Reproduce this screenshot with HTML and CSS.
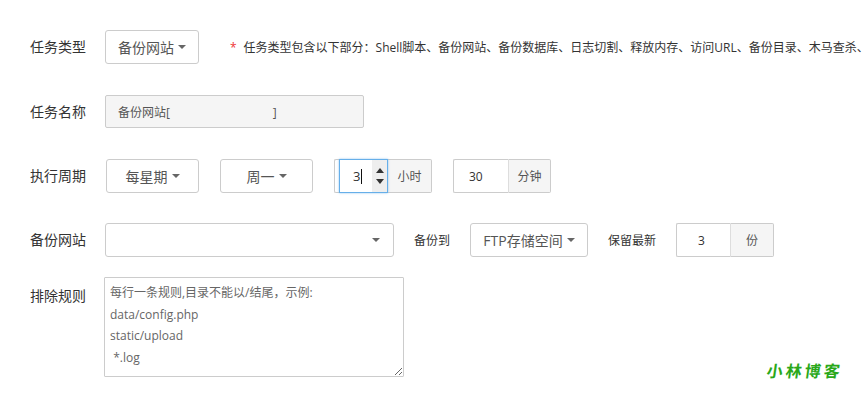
FILE: index.html
```html
<!DOCTYPE html>
<html lang="zh-CN">
<head>
<meta charset="utf-8">
<title>计划任务</title>
<link rel="stylesheet" href="styles.css">
</head>
<body>
<div class="form">
  <div class="row r1">
    <div class="lbl">任务类型</div>
    <div class="btn w-type">备份网站<span class="caret"></span></div>
    <div class="hint"><span class="star">*</span>任务类型包含以下部分：Shell脚本、备份网站、备份数据库、日志切割、释放内存、访问URL、备份目录、木马查杀、</div>
  </div>
  <div class="row r2">
    <div class="lbl">任务名称</div>
    <input class="name-in" type="text" readonly value="备份网站[                                 ]">
  </div>
  <div class="row r3">
    <div class="lbl">执行周期</div>
    <div class="btn w-cycle">每星期<span class="caret"></span></div>
    <div class="btn w-cycle">周一<span class="caret"></span></div>
    <div class="grp">
      <div class="grp-pad"></div>
      <div class="num">
        <div class="num-val">3<span class="cursor"></span></div>
        <div class="spin"><span class="up"></span><span class="down"></span></div>
      </div>
      <div class="addon a-hour">小时</div>
    </div>
    <div class="grp">
      <div class="txt-in min-in">30</div>
      <div class="addon a-min">分钟</div>
    </div>
  </div>
  <div class="row r4">
    <div class="lbl">备份网站</div>
    <div class="select"><span class="caret"></span></div>
    <div class="slbl">备份到</div>
    <div class="btn w-ftp">FTP存储空间<span class="caret"></span></div>
    <div class="slbl">保留最新</div>
    <div class="grp">
      <div class="txt-in keep-in">3</div>
      <div class="addon a-keep">份</div>
    </div>
  </div>
  <div class="row r5">
    <div class="lbl">排除规则</div>
    <textarea class="rules">每行一条规则,目录不能以/结尾，示例:
data/config.php
static/upload
 *.log</textarea>
  </div>
</div>
<div class="brand">小林博客</div>
</body>
</html>
```
FILE: styles.css
```css
* { box-sizing: border-box; }
html, body {
  margin: 0;
  padding: 0;
  background: #fff;
  overflow: hidden;
}
body {
  width: 865px;
  height: 406px;
  position: relative;
  font-family: "Open Sans", "Noto Sans CJK SC", sans-serif;
  font-size: 12px;
  color: #555;
}
.form {
  padding: 30px 0 0 30px;
}
.row {
  display: flex;
  align-items: center;
  height: 34px;
  white-space: nowrap;
}
.r1 { margin-bottom: 31px; }
.r2 { margin-bottom: 31px; height: 33px; }
.r3 { margin-bottom: 30px; gap: 21px; }
.r4 { margin-bottom: 20px; }
.r5 { align-items: flex-start; height: auto; }

.lbl {
  width: 75px;
  flex: none;
  font-size: 14px;
  line-height: 34px;
  color: #333;
}
.r3 .lbl { margin-right: -20px; }
.r5 .lbl { padding-top: 2px; }

.btn {
  height: 34px;
  border: 1px solid #ccc;
  border-radius: 3px;
  background: #fff;
  display: flex;
  align-items: center;
  justify-content: center;
  font-size: 14px;
  color: #555;
  flex: none;
}
.w-type { width: 94px; }
.w-cycle { width: 93px; }
.w-ftp { width: 118px; }

.caret {
  display: inline-block;
  width: 0;
  height: 0;
  margin-left: 4px;
  border-top: 4px solid #666;
  border-left: 4px solid transparent;
  border-right: 4px solid transparent;
}

.hint {
  margin-left: 31px;
  font-size: 12px;
  color: #333;
}
.star {
  color: #e33;
  margin-right: 7px;
}

.name-in {
  width: 259px;
  height: 33px;
  border: 1px solid #ccc;
  border-radius: 2px;
  background: #f5f5f5;
  padding: 0 12px;
  font-family: "Open Sans", "Noto Sans CJK SC", sans-serif;
  font-size: 12px;
  color: #555;
  outline: none;
  white-space: pre;
}

.grp {
  display: flex;
  height: 34px;
  flex: none;
}
.grp-pad {
  width: 5px;
  border: 1px solid #ccc;
  border-right: none;
  border-radius: 2px 0 0 2px;
}
.num {
  width: 49px;
  border: 1px solid #66afe9;
  box-shadow: 0 0 2px rgba(102, 175, 233, 0.7);
  display: flex;
  background: #fff;
  position: relative;
}
.num-val {
  flex: 1;
  padding-left: 13px;
  font-size: 13px;
  line-height: 32px;
  color: #333;
  display: flex;
  align-items: center;
}
.cursor {
  display: inline-block;
  width: 1px;
  height: 15px;
  background: #111;
  margin-left: 1px;
}
.spin {
  width: 15px;
  background: #eee;
  display: flex;
  flex-direction: column;
  justify-content: center;
  align-items: center;
  gap: 6px;
}
.up, .down {
  width: 0;
  height: 0;
  border-left: 4px solid transparent;
  border-right: 4px solid transparent;
}
.up { border-bottom: 5px solid #333; }
.down { border-top: 5px solid #333; }

.addon {
  border: 1px solid #ccc;
  border-left: none;
  border-radius: 0 2px 2px 0;
  background: #f5f5f5;
  display: flex;
  align-items: center;
  justify-content: center;
  font-size: 12px;
  color: #555;
}
.a-hour { width: 44px; }
.a-min { width: 43px; border-left: 1px solid #ddd; }
.a-keep { width: 44px; border-left: 1px solid #ddd; }

.txt-in {
  border: 1px solid #ccc;
  border-right: none;
  border-radius: 2px 0 0 2px;
  background: #fff;
  display: flex;
  align-items: center;
  font-size: 12px;
  color: #333;
}
.min-in { width: 55px; padding-left: 15px; }
.keep-in { width: 54px; padding-left: 21px; }

.select {
  width: 289px;
  height: 34px;
  border: 1px solid #ccc;
  border-radius: 3px;
  display: flex;
  align-items: center;
  justify-content: flex-end;
  padding-right: 13px;
  flex: none;
}
.slbl {
  margin: 0 20px;
  font-size: 12px;
  color: #333;
}

.rules {
  width: 300px;
  height: 100px;
  margin: 0 0 0 -1px;
  border: 1px solid #ccc;
  border-radius: 1px;
  padding: 4px 5px;
  font-family: "Open Sans", "Noto Sans CJK SC", sans-serif;
  font-size: 12px;
  line-height: 21.5px;
  color: #666;
  resize: both;
  overflow: auto;
  outline: none;
}

.brand {
  position: absolute;
  left: 767px;
  top: 358px;
  font-family: "Noto Sans CJK SC", sans-serif;
  font-size: 16px;
  font-weight: 700;
  letter-spacing: 3px;
  color: #2aa81a;
  transform: skewX(-8deg);
}
```
